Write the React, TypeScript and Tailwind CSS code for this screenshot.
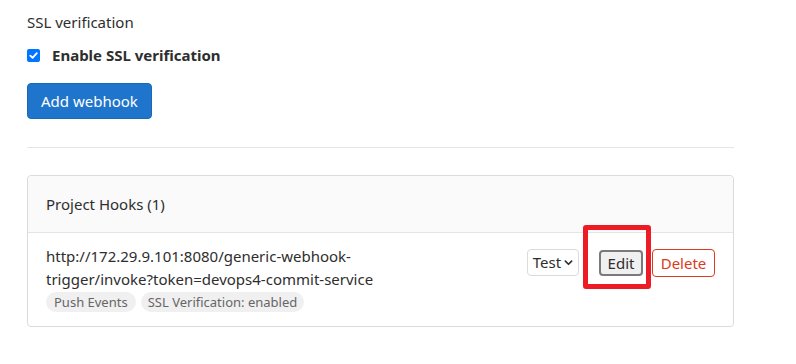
import React from "react";

export default function App() {
  return (
    <div
      className="w-[796px] h-[364px] bg-white overflow-hidden pl-[27px] pt-[12px] text-[#2e2e2e]"
      style={{ fontFamily: '"Noto Sans", "Open Sans", sans-serif' }}
    >
      <div className="w-[707px]">
        <div className="text-[15px] leading-[21px]">SSL verification</div>
        <label className="mt-[12px] flex items-center h-[20px]">
          <span className="w-[13px] h-[13px] rounded-[2px] bg-[#0075ff] flex items-center justify-center">
            <svg width="11" height="11" viewBox="0 0 12 12">
              <path d="M2.5 6.2 L5 8.6 L9.6 3.4" fill="none" stroke="white" strokeWidth="2" strokeLinecap="round" strokeLinejoin="round" />
            </svg>
          </span>
          <span className="ml-[12px] text-[15px] font-bold leading-[20px]">Enable SSL verification</span>
        </label>
        <button className="mt-[18px] h-[36px] px-[13px] rounded-[4px] bg-[#1f75cb] border border-[#1b69b6] text-white text-[15px] leading-[20px]">
          Add webhook
        </button>
        <div className="mt-[28px] h-px bg-[#e5e5e5]" />
        <div className="mt-[27px] h-[152px] border border-[#dbdbdb] rounded-[4px] overflow-visible">
          <div className="h-[57px] bg-[#fafafa] border-b border-[#e5e5e5] rounded-t-[4px] flex items-center px-[18px] text-[15px]">
            Project Hooks (1)
          </div>
          <div className="flex px-[18px] pt-[12px]">
            <div className="flex-1">
              <div className="text-[15px] leading-[23px] w-[360px]">
                http://172.29.9.101:8080/generic-webhook-
                <br />
                trigger/invoke?token=devops4-commit-service
              </div>
              <div className="flex gap-[5px] mt-[1px]">
                <span className="h-[20px] px-[8px] rounded-full bg-[#f0f0f0] text-[#666] text-[13px] leading-[20px]">Push Events</span>
                <span className="h-[20px] px-[7px] rounded-full bg-[#f0f0f0] text-[#666] text-[13px] leading-[20px]">SSL Verification: enabled</span>
              </div>
            </div>
            <div className="flex items-start pt-[4px]">
              <button className="h-[27px] w-[52px] rounded-[4px] border border-[#dbdbdb] bg-white flex items-center justify-center gap-[3px] text-[15px] text-[#2e2e2e]">
                Test
                <svg width="9" height="9" viewBox="0 0 10 10">
                  <path d="M1.5 3.5 L5 7 L8.5 3.5" fill="none" stroke="#2e2e2e" strokeWidth="1.8" strokeLinecap="round" strokeLinejoin="round" />
                </svg>
              </button>
              <div className="relative ml-[20px]">
                <div className="absolute left-[-16px] top-[-24px] w-[68px] h-[64px] border-[5px] border-[#ed1c24] rounded-[3px]" />
                <button className="relative h-[26px] w-[44px] mt-[1px] rounded-[4px] border-2 border-[#7a7a7a] bg-[#f0f0f0] text-[15px] text-[#2e2e2e] flex items-center justify-center">
                  Edit
                </button>
              </div>
              <button className="ml-[9px] h-[28px] w-[63px] rounded-[4px] border border-[#db3b21] bg-white text-[15px] text-[#db3b21] flex items-center justify-center">
                Delete
              </button>
            </div>
          </div>
        </div>
      </div>
    </div>
  );
}
